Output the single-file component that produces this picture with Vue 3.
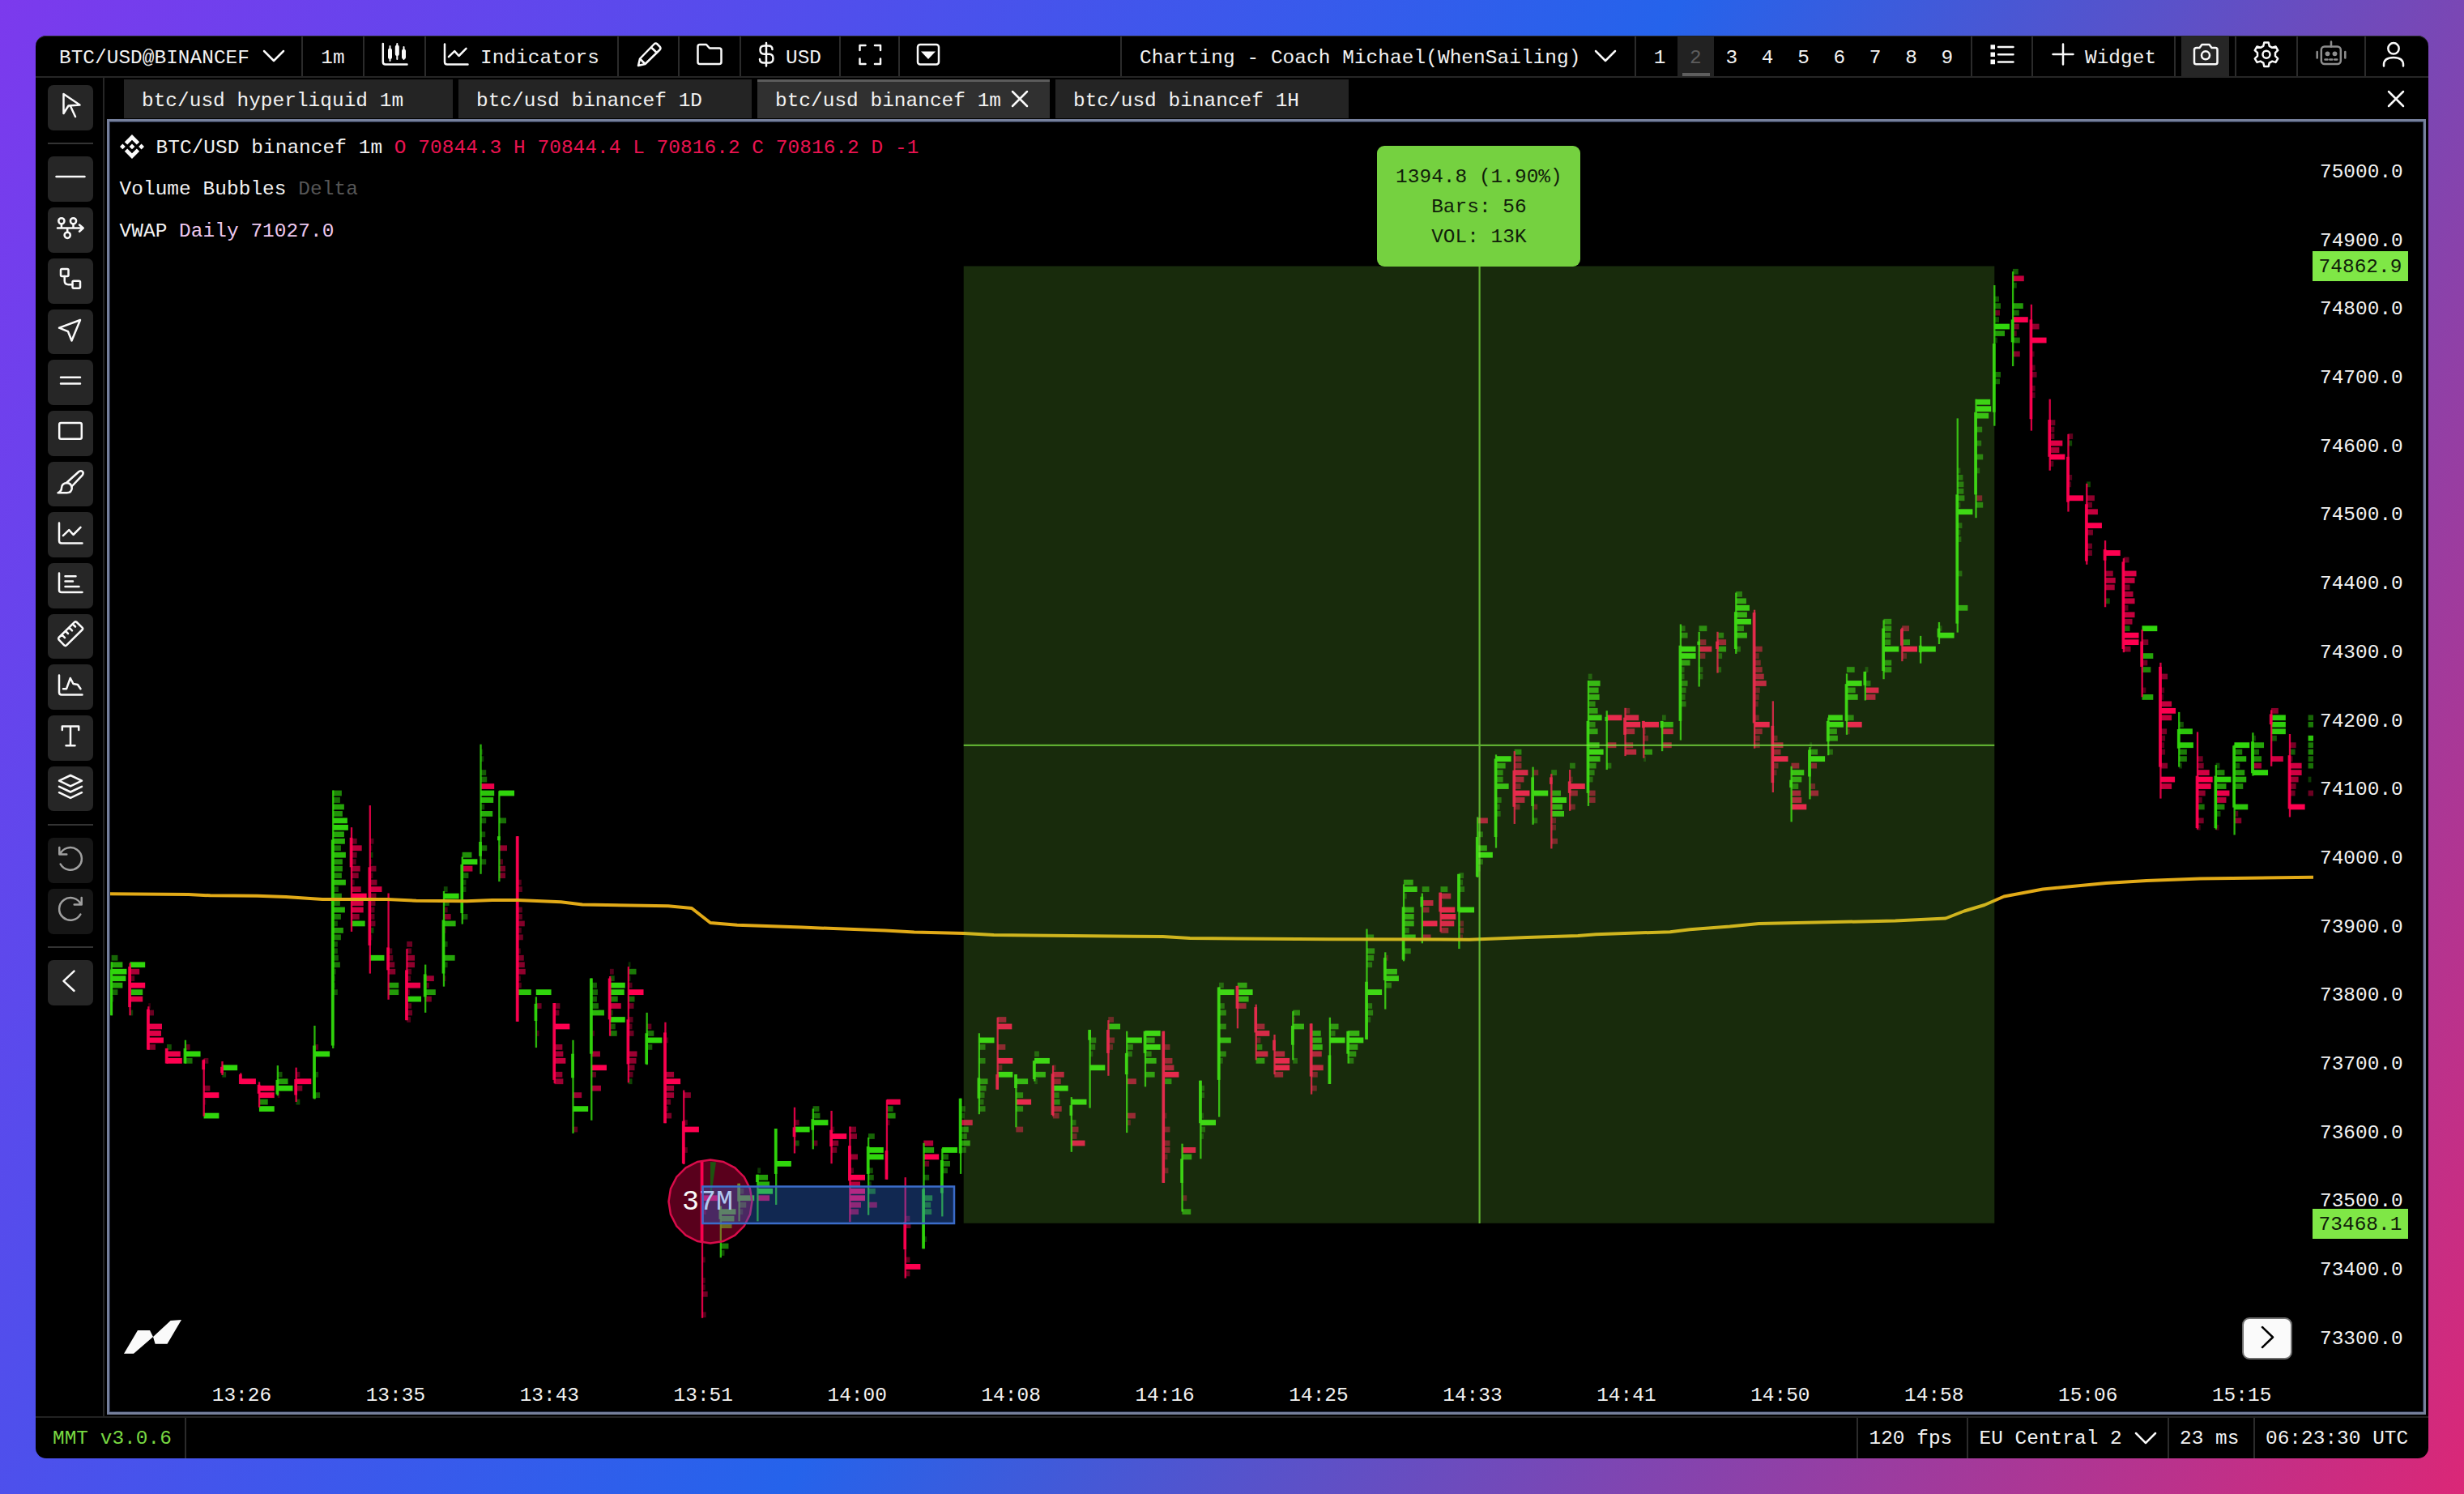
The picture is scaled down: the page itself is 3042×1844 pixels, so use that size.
<script setup>
const icons = {
  chevron: '<path d="M8 14l12 12 12-12"/>',
  candles: '<path d="M5.8 7v22.500q0 3 3 3H35.500"/><path stroke-width="2" d="M14.500 10v18M23.300 7v19M31.500 11v15"/><path stroke-width="5" d="M14.500 15v8.500M23.300 11v8.500M31.500 16v7.500"/>',
  line: '<path d="M6 7.500v22q0 3 3 3H34.500M10.900 23.200l7.300-7.100 5.300 5.900 9-9.100"/>',
  pencil: '<path d="M7 34l2-8.500L26.500 7.500q2-2 4 0l3 3q2 2 0 4L15.500 32zM9 25.500l6.500 6.500M23 11.500l6.800 6.500"/>',
  folder: '<path d="M5.500 10.500q0-2.500 2.500-2.500h8l4 4.500h12q2.500 0 2.500 2.500v14.500q0 2.500-2.500 2.500H8q-2.500 0-2.500-2.500z"/>',
  dollar: '<path d="M20 6v28.500M27.500 14q0-4.500-5-4.500h-5q-5 0-5 5t5 5.300h6q5 0 5 5.400t-5 5.300h-6.500q-5 0-5-4.500"/>',
  scan: '<path d="M7.500 15V9h7M26 9h7v6M33 25.500V32h-7M14.500 32h-7v-6.500"/>',
  boxdown: '<rect x="7" y="8" width="26" height="24.500" rx="3"/><path fill="currentColor" stroke="none" d="M11 16.500h18L20 26z"/>',
  list: '<path d="M15 11h18.500M15 20.300h18.500M15 29.400h18.500"/><path stroke="none" fill="currentColor" d="M5.500 8.200h5.500v5.600H5.500zM5.500 17.500h5.500v5.600H5.500zM5.500 26.600h5.500v5.600H5.500z"/>',
  plus: '<path d="M20 7.500v25M7.500 20h25"/>',
  camera: '<path d="M9 12h3.500l3-4h9l3 4H32q2.500 0 2.500 2.500V30q0 2.300-2.500 2.300H8.500Q6 32.300 6 30V14.500Q6 12 9 12z"/><circle cx="20" cy="21.300" r="5"/>',
  gear: '<path d="M17.300 5.500h5.400l1 4.300 3.500 2 4.300-1.300 2.700 4.600-3.200 3.100v4l3.200 3.100-2.700 4.600-4.300-1.300-3.500 2-1 4.400h-5.400l-1-4.400-3.500-2-4.300 1.300-2.700-4.600L9 22.200v-4l-3.200-3.100 2.700-4.600 4.300 1.300 3.500-2z"/><circle cx="20" cy="20.200" r="4.500"/>',
  robot: '<rect x="7.800" y="10.500" width="24" height="21.500" rx="4"/><path d="M20 4.500v6M2.700 17v7.500M37.300 17v7.500"/><path d="M12.500 26.500h3M18.300 26.500h3M24.200 26.500h3"/><g stroke="none" fill="currentColor"><circle cx="15.500" cy="19.300" r="2.900"/><circle cx="24.500" cy="19.300" r="2.900"/></g>',
  user: '<circle cx="20" cy="12.800" r="6.700"/><path d="M8 34.500v-1.500q0-9 12-9t12 9v1.500"/>',
  close: '<path d="M11 11l18 18M29 11L11 29"/>',
  cursor: '<path d="M11.500 6v24l6-9.500 14-1z"/><path d="M20 21l6 13"/>',
  hline: '<path d="M2.500 19H37.500"/>',
  nodes: '<circle cx="8.900" cy="10.800" r="3.600"/><circle cx="23.500" cy="10.800" r="3.600"/><circle cx="16.200" cy="28.300" r="3.600"/><path d="M4 19.500h31.500M31 15.500l4.700 4-4.700 4.200M8.900 14.500v5M23.500 14.500v5M16.200 19.500v5"/>',
  connector: '<rect x="8" y="8" width="9.500" height="9" rx="1.500"/><rect x="22.500" y="22.700" width="9.500" height="9" rx="1.500"/><path d="M12.700 17v5.500q0 4.700 4.700 4.700h5"/>',
  arrow: '<path d="M32 8L6 17.700l11 4.500 4.500 11.300z"/>',
  equal: '<path d="M8 15.700h24M8 23.600h24"/>',
  rect: '<rect x="6.200" y="10" width="27.600" height="19.800" rx="2"/>',
  brush: '<path d="M15.500 20.500L30.500 7q2.500-1.500 4.300 0t0 4.300L21.500 25.500"/><path d="M4.500 33.300h11q6 0 6.300-6-.5-6-6.500-6.300-6 .5-6.300 6.300 0 4-4.500 6z"/>',
  hist: '<path d="M6 7.500v21q0 2.500 3 2.500h25.500M13.500 11.200h13M13.500 17.600h9.500M13.500 24h17"/>',
  ruler: '<path d="M27.200 4.500q-1-.5-2 .2L5.500 24q-1 1.200 0 2.400l7 7.200q1.200 1 2.400 0L34.800 14q1-1 0-2.200zM9.500 20.500l3.500 3.600M14 16l3 3M18.500 11.700l3.500 3.600M23 7.500l3 3"/>',
  profile: '<path d="M6 7.500v21q0 3 3 3h25.500M11 24.300h4L19.800 11l3.700 7 5.400 1 3.600 5.300"/>',
  text: '<path d="M9.800 13V8.500h20.400V13M20 8.500V32M14.500 32.200h11"/>',
  layers: '<path d="M20 6l14 6.700-14 6.700-14-6.700zM6 19.800l14 6.700 14-6.700M6 27.200l14 6.700 14-6.700"/>',
  undo: '<path d="M6.300 6v8.500h9M7 14.500A14 13.800 0 1 1 7.600 26.500"/>',
  redo: '<path d="M33.700 6v8.500h-9M33 14.500A14 13.800 0 1 0 32.400 26.500"/>',
  back: '<path d="M24.500 7.600L11.500 19.800l13 12.200"/>',
  next: '<path d="M14 8l13 12.500L14 33"/>',
}

const tabs = [
  { name: 'btc/usd hyperliquid 1m', cls: 't1' },
  { name: 'btc/usd binancef 1D', cls: 't2' },
  { name: 'btc/usd binancef 1m', cls: 't3 on', close: true },
  { name: 'btc/usd binancef 1H', cls: 't4' },
]

const tools = [
  ['cursor'],
  ['hline', 'nodes', 'connector', 'arrow', 'equal', 'rect', 'brush', 'line', 'hist', 'ruler', 'profile', 'text', 'layers'],
  ['undo', 'redo'],
  ['back'],
]

const prices = Array.from({ length: 18 }, (_, i) => (75000 - i * 100).toFixed(1))
const times = ['13:26', '13:35', '13:43', '13:51', '14:00', '14:08', '14:16', '14:25', '14:33', '14:41', '14:50', '14:58', '15:06', '15:15']

// One line per minute: side, wick top/bottom, body top/bottom, first level, then
// a delta per level (negative = sell). Levels count down from 75000 in steps of 10.
const raw = `
g 115.1 122.9 116.2 122.9 114 7 13 18 17 13 7 2
r 115.3 122.9 115.8 121.7 115 18 -11 -5 -18 15 -15 0 3
r 121.6 127.9 122 127.9 121 -2 -6 0 -16 -15 -18 -8
r 127.7 129.9 127.7 129.9 127 5 -16 -18
g 126.5 129.9 127.7 129.9 127 -5 18 8
r 129.3 137.6 129.4 130.8 129 -5 0 0 0 -7 -18 -2 0 18
r 129.6 131.6 130.4 131.3 130 18 4
r 131.3 132.9 131.5 132.9 132 -18
r 132.6 136.3 133 134.3 133 -18 -18 10 18
g 130.2 134.6 132.3 134.4 131 5 12 18 -2
r 130.5 135.5 132.2 134.5 131 -4 -18 -7 0 4
g 124.4 135.1 127.3 135 127 -4 18 0 0 4 0 0 6
g 90.1 127.7 97.3 127.3 90 10 8 13 11 17 18 13 14 9 15 11 11 10 15 6 10 8 14 9 5 12 9 5 5 6 8 3 2 2 5
r 95.5 110.7 97 101.3 97 -6 -12 -6 -5 -10 -8 -3 -11 -18 -14 -14 -9 16
r 92.3 116.8 101.3 112.7 97 -4 -2 3 -2 -7 -3 -8 -14 -7 -6 -5 -5 -6 4 -2 0 0 17
r 105.1 120.6 113 116.3 113 -4 -5 -7 -8 0 12 12
r 113.2 123.6 116.3 123.6 112 -6 -5 -9 -9 -5 -4 -16 -3 17 -5 -6 -4
g 115.5 122.5 116.9 120.2 117 -10 -4 12 -7
g 104.8 118.7 109 116.8 104 4 18 6 -4 -8 14 -2 0 4 0 13 4 0 -2
g 99.8 109.6 100.9 108 99 11 18 -12 7 4 4 0 0 0 6
g 83.4 102.3 97.6 99.7 84 2 3 0 6 7 -16 16 15 4 14 6 0 5 0 7 0 6
g 90.2 103.4 96.8 97.4 90 18 0 0 0 8 0 0 0 -9 0 -4 -7 -7
r 96.8 123.8 96.8 123.8 103 -4 -5 0 0 -5 -5 -8 -4 -6 0 -3 -7 -8 -9 -3 -4 16
g 120.2 127.6 121.2 123.7 119 18 0 -6 0 0 0 -3
r 121.1 132.8 121.1 132.3 121 -6 -5 0 -18 0 0 -9 -10 -13 0 -9 -10
g 126.5 140.1 128.5 132 134 -10 0 18 0 0 -5
g 117.5 138.2 117.5 128.5 118 6 7 6 8 15 0 0 -3 0 0 -10 0 -18 -5 0 -11
r 117.2 125.9 117.5 123.5 116 -4 5 18 17 9 -13 3 18 6 8
r 115.8 132.7 123.5 130 115 2 9 2 -4 -18 7 -6 0 -5 -4 -6 0 0 -10 -9 -7 -5 4
g 122.5 130.1 125.5 130 124 -5 8 18 6
r 123.9 138.6 125.4 138.6 126 -3 0 0 0 0 -10 -18 -10 -10 -6 -3 -7
r 133.8 144.6 138.3 144.5 134 -8 0 0 0 -4 -18 0 0 -4
r 144.2 167 144.2 156 149 -18 -3 -4 0 0 0 0 0 0 -3 0 0 -3 -3 -6 0 0 -4
g 150.7 158.2 150.7 152.6 151 18 16 13 0 0 9 4
g 147.4 152.9 147.4 150 148 5 18 8 4
g 146.1 152.9 146.1 147.2 145 3 12 14 18 -14
g 139.4 150.5 139.4 146 144 18
r 136.3 143 139.2 140.6 138 -5 18 0 5
g 136.5 142.4 138 139.6 136 7 8 18 0 0 -5
r 136.8 144.5 139.6 142 139 -3 -18 -8 -6
r 139.1 153 141.9 147 139 -7 -8 0 0 -9 0 -4 -18 -12 -18 -18 -13 -10
g 140.7 152 142 146 140 7 0 18 18 0 5 6 3 8 0 -10
r 135.2 146.8 142.6 146.8 135 -16 7 10 -3
r 146.5 161.2 153 157 152 -5 -6 0 0 0 0 -5 -18 -5
g 141.5 156.9 148.2 156.9 141 -11 12 -18 -6 0 6 0 0 10 8 9 0 0 0 3
g 142.3 152.2 144 148.8 142 18 7 9 6
g 135 146 135 143 136 5 4 -14 9 7 11 6
g 125.5 137.3 132 135 126 18 7 0 7 0 0 10 8 6 5 7
r 123.2 133.7 131.5 133.7 123 -10 -17 0 0 -9 0 -18 -5 18
g 131.5 139.2 131.5 133.5 132 14 0 8 -18 8 0 0 -8
g 129.5 132.5 129.5 132.2 128 5 18 0 13 3
r 130.2 137.6 131.4 137.4 130 -3 -13 -9 18 7 8 -10 -7
g 134.8 142.8 136 137.5 135 18 0 0 5 -8 -6 -16
g 125 136.4 125 126.5 126 7 6 3 0 18
r 123.6 131.7 125 128.4 123 -6 14 0 -7 -5
g 125.2 140 128.4 131.5 126 18 7 6 0 0 0 -11 0 0 0 0 -10 -4
g 125.2 133.3 125.2 128.4 125 18 11 18 7 13 0 11
r 125.2 147.3 125.2 147.3 127 -7 0 -10 -12 -18 9 0 0 0 0 -3 0 -7 0 -7 -7 -4 0 -5
g 141.6 151.5 143.8 147.3 142 -16 11 0 0 0 0 0 -5 0 10
g 132.4 143.8 132.4 138.6 133 4 4 0 0 3 18 5 3
g 118.8 137.7 118.8 132.3 118 5 18 0 6 8 0 8 0 14 0 8 4
r 118.6 124.8 118.6 121.9 118 11 18 13 -10
r 121.3 129.4 121.7 125.4 124 -10 -16 -5 7 -14 10
r 125.7 131.5 126.5 128 128 -12 -18 -18 -10
g 122.3 129.4 124.4 127.2 122 8 -2 13 0 0 0 0 5
r 124.1 134.4 124.1 131.8 125 11 12 13 -12 0 -14 -7 0 -6
g 123.2 132.9 128.7 132.9 124 10 6 18
g 125.2 129.9 125.2 128.5 125 13 18 11 9 6
g 110.3 126.4 118 126.4 111 8 0 9 8 6 0 0 0 18 0 6 7 4
g 113.7 122 114.5 117.8 114 -3 0 14 16 7
g 103.8 115 107.1 114.8 103 11 16 3 0 12 12 12 6 14 0 8
g 105.1 112.4 105.6 107.1 104 8 0 -13 -8 0 -18 0 -10
r 105 110.7 105 107.8 104 8 -12 -2 -17 -18 -16 -9
g 102.3 113.2 102.3 107.8 102 5 4 6 0 0 18 0 -5 -5 -4
g 94 102.8 96.9 102.7 94 -12 0 6 0 11 18 6 3
g 84.9 98.5 85.5 96.9 85 18 11 8 8 15 0 6 4 5
r 84.4 95 87.2 92.5 84 8 -8 -8 -16 -11 -7 -18 -12 -6
g 86.7 95.1 88.2 92.4 87 -6 0 0 18 0 -5 0 5
r 87.7 98.6 88.2 89.2 87 6 0 0 11 18 13 15 -5 -5 0 -7
r 87.1 93.1 88.8 90.5 86 6 0 -3 -18 -9 0 -6
g 74.1 92.4 80 90.5 73 4 14 12 13 8 11 16 8 11 0 13 18 14 9 7 5 0 -8 -8
g 78.5 87.1 79.4 80 79 -18 0 0 0 -11 0 0 5
r 78.1 85.1 79.5 82 78 -5 -16 -18 -11 0 -9 -13
r 80 85.4 80 81 80 -18 -2 -5 0 10 2
g 80 84.4 80 81 79 4 13 -13 0 -11
g 65.9 82.8 69 80 66 5 8 0 18 18 11 4 4 8 6 5 6
g 67 75 68.4 68.9 66 9 0 -8 -15 -7 0 4 4
r 67 73 68.4 69.5 67 7 -10 10 5 0 4
g 61.3 70.2 64.1 69.5 61 7 12 16 13 18 9 13 0 5
r 63.8 84 64.2 80.3 69 -9 -5 -7 -9 -11 -14 -6 -5 -4 0 -5 -18 -9 -6 -6
r 77.1 90.4 80.7 89 82 -5 -12 -9 -18 -6 -4
g 86.6 94.7 88.6 89.7 86 -9 15 12 8 -11 -12 -18
g 83.8 91.4 84.2 88.1 83 2 9 18 -8 0 0 -6 -10
g 79.5 85 80 83 79 17 18 10 11 0 5
g 73.1 82 74.6 80 72 9 0 18 10 13 0 0 8 -18 -3
g 72.8 77 72.8 74.8 72 3 0 6 -16 -12
g 65.3 73.9 66.5 72.7 65 9 9 8 8 18 0 9 9
r 66.4 71.3 66.6 69 66 -8 0 9 -18 -5
g 67.6 71.6 69 70 69 18
g 65.6 68.8 66.5 67.8 66 3 18
g 35.9 67.1 47 65.8 43 3 6 7 7 8 3 18 0 5 3 4 0 0 0 0 5 0 0 0 0 12
g 33.1 50.4 35 47 33 17 18 15 0 7 0 6 0 8 0 4 0 0 0 -7 8
g 16.5 37 25 35 18 5 7 -6 5 18 12 3 0 0 0 0 7 6
g 14.5 28.3 21.5 24.8 14 6 -13 4 0 0 12 7 -18 -7 -4 8 0 -8
r 19.3 37.7 21.5 36 22 -9 0 -18 0 -3 0 -4 -6 0 -4 -4
r 33.1 43.5 36.1 41.5 36 -6 -5 -5 -15 -11 -18 -4
r 38.2 49.5 41.5 48.1 38 -5 4 0 0 0 0 -4 -3 0 -18
r 45.4 57.2 48.4 56.7 45 4 0 -9 -6 -13 0 -18 -7 0 -6 -6
r 53.7 63.4 55 56.6 55 -18 0 0 -9 -12 -11 0 5
r 56.3 70 56.8 69.5 56 -6 0 -15 -13 -7 -11 -13 -5 -13 -10 7 -18 -18 -8
r 66.7 76.5 68.4 72.1 66 18 0 -7 0 13 -6 10 0 0 -4 13
r 71.5 91.3 72.1 86.7 73 -8 0 -4 -3 -13 -18 -13 0 -7 -5 -4 -5 0 -8 0 -17 -13
g 78.7 86.7 81.2 84 80 5 16 0 17 9 9 3
r 81.6 95.8 88 95.6 85 -6 -7 -14 -18 -16 -9 -5 8 0 -7 -3
g 86.4 95.8 88 95.6 86 4 10 18 12 -16 -12 10 5 0 -3
g 83.5 96.6 83.6 92.6 83 18 9 14 6 12 14 10 0 0 16 -4 -8
g 81.7 88 83 87.6 82 3 13 7 10 -10 18
r 78.4 86.6 79 80.5 78 -8 17 17 17 6 0 0 -14
r 81.9 94 85 92.8 83 -7 6 -3 -14 -14 -10 -7 -6 0 -18
g 79 79 79 79 79 7 9 0 16 9 10 7 8 0 3 0 -6`

const LEVEL = 8.47
const y = (level) => 212.3 + level * LEVEL
const GREEN = '#30d60c'
const RED = '#ff0050'

const candles = raw.trim().split('\n').map((row, i) => {
  const [side, ...rest] = row.split(' ')
  const [top, bottom, bodyTop, bodyBottom, first, ...deltas] = rest.map(Number)
  const x = 137.6 + i * 22.79
  return {
    x,
    color: side === 'g' ? GREEN : RED,
    top: y(top),
    height: y(bottom) - y(top),
    bodyTop: y(bodyTop),
    bodyHeight: y(bodyBottom) - y(bodyTop),
    bars: deltas
      .map((d, n) => ({
        y: y(first + n) + 1,
        w: Math.abs(d) + 0.8,
        color: d > 0 ? GREEN : RED,
        alpha: Math.min(1, 0.12 + Math.abs(d) * 0.05),
      }))
      .filter((b) => b.w > 1),
  }
})

const vwap = [
  [132, 1103.3], [232.7, 1104], [259.5, 1105.3], [317.5, 1105.7], [353, 1107], [398, 1110], [478, 1110], [514, 1111.7],
  [576, 1112.3], [607.7, 1111], [639, 1111], [692.5, 1113.3], [719, 1116.5], [825, 1118.3], [854, 1121], [877, 1139],
  [910, 1141.8], [990, 1144.6], [1093, 1148.6], [1128.6, 1150.4], [1190, 1152], [1226.8, 1154], [1400, 1155.7],
  [1435.7, 1155.9], [1469, 1158], [1640, 1159.2], [1814, 1159.7], [1885.5, 1156.9], [1948, 1155], [1970.4, 1153.2],
  [2061.9, 1150.2], [2086.4, 1147.3], [2135.5, 1143.6], [2171.3, 1139.9], [2340, 1136.6], [2402, 1133.5], [2425, 1124.500],
  [2450, 1117], [2474, 1106.5], [2522, 1097.5], [2600, 1090], [2650, 1087], [2716, 1084.5], [2856, 1082.8],
].map((p) => p.join(',')).join(' ')

const bubble = Array.from({ length: 20 }, (_, i) => {
  const a = (i * Math.PI) / 10
  return `${(877 + 51.5 * Math.sin(a)).toFixed(1)},${(1483 - 51.5 * Math.cos(a)).toFixed(1)}`
}).join(' ')
</script>

<template>
  <div class="desktop">
    <div class="window">
      <header class="topbar">
        <div class="cell symbol">
          <span>BTC/USD@BINANCEF</span>
          <svg class="ico chev" viewBox="0 0 40 40" v-html="icons.chevron" />
        </div>
        <div class="cell w76"><span>1m</span></div>
        <div class="cell w76"><svg class="ico" viewBox="0 0 40 40" v-html="icons.candles" /></div>
        <div class="cell indicators">
          <svg class="ico" viewBox="0 0 40 40" v-html="icons.line" />
          <span>Indicators</span>
        </div>
        <div class="cell w75"><svg class="ico" viewBox="0 0 40 40" v-html="icons.pencil" /></div>
        <div class="cell w76"><svg class="ico" viewBox="0 0 40 40" v-html="icons.folder" /></div>
        <div class="cell currency">
          <svg class="ico" viewBox="0 0 40 40" v-html="icons.dollar" />
          <span>USD</span>
        </div>
        <div class="cell w73"><svg class="ico" viewBox="0 0 40 40" v-html="icons.scan" /></div>
        <div class="cell bare"><svg class="ico" viewBox="0 0 40 40" v-html="icons.boxdown" /></div>
        <div class="spacer"></div>
        <div class="cell layout">
          <span>Charting - Coach Michael(WhenSailing)</span>
          <svg class="ico chev" viewBox="0 0 40 40" v-html="icons.chevron" />
        </div>
        <div class="cell pages">
          <div v-for="n in 9" :key="n" class="page" :class="{ active: n === 2 }"><span>{{ n }}</span></div>
        </div>
        <div class="cell w75"><svg class="ico" viewBox="0 0 40 40" v-html="icons.list" /></div>
        <div class="cell widget">
          <svg class="ico" viewBox="0 0 40 40" v-html="icons.plus" />
          <span>Widget</span>
        </div>
        <div class="cell w75">
          <div class="shot"><svg class="ico" viewBox="0 0 40 40" v-html="icons.camera" /></div>
        </div>
        <div class="cell w76"><svg class="ico" viewBox="0 0 40 40" v-html="icons.gear" /></div>
        <div class="cell w83"><svg class="ico dim" viewBox="0 0 40 40" v-html="icons.robot" /></div>
        <div class="cell last"><svg class="ico" viewBox="0 0 40 40" v-html="icons.user" /></div>
      </header>

      <div class="body">
        <aside class="tools">
          <div v-for="(group, g) in tools" :key="g" class="group">
            <button v-for="t in group" :key="t" class="tool" :class="{ muted: g === 2 }">
              <svg class="ico" viewBox="0 0 40 40" v-html="icons[t]" />
            </button>
          </div>
        </aside>

        <main class="work">
          <nav class="tabs">
            <div v-for="t in tabs" :key="t.name" class="tab" :class="t.cls">
              <span>{{ t.name }}</span>
              <svg v-if="t.close" class="ico" viewBox="0 0 40 40" v-html="icons.close" />
            </div>
            <div class="spacer"></div>
            <svg class="ico tabs-close" viewBox="0 0 40 40" v-html="icons.close" />
          </nav>

          <section class="pane">
            <svg class="plot" viewBox="136 151 2719.500 1591">
              <g v-for="(c, i) in candles" :key="i">
                <rect v-for="(b, n) in c.bars" :key="n" :x="c.x" :y="b.y" :width="b.w" height="6.800" :fill="b.color" :fill-opacity="b.alpha" />
                <rect :x="c.x - 1" :y="c.top" width="2.300" :height="c.height" :fill="c.color" fill-opacity=".85" />
                <rect :x="c.x - 2.2" :y="c.bodyTop" width="3.700" :height="c.bodyHeight" :fill="c.color" fill-opacity=".92" />
              </g>
              <polyline :points="vwap" fill="none" stroke="#e2aa17" stroke-width="4" stroke-linejoin="round" />
              <polygon :points="bubble" fill="#ff0050" fill-opacity=".35" stroke="#d80c4a" stroke-width="2.500" />
              <polygon points="877,1482 877,1434 884,1434.500" fill="#1d5410" />
              <text x="873.500" y="1493" text-anchor="middle" class="bubble-text">37M</text>
              <rect x="867.500" y="1464.500" width="310.500" height="45.500" fill="#2e70e0" fill-opacity=".36" stroke="#3b6cc9" stroke-width="2.500" />
              <rect x="1189.700" y="328.500" width="1272.600" height="1181.300" fill="#7de742" fill-opacity=".19" />
              <path d="M1826.600 328.500V1510M1189.700 919.800H2462.300" stroke="#7de742" stroke-opacity=".7" stroke-width="2.200" />
              <path fill="#fafafa" d="M170 1642h15l4 8-24 20.700h-12zM210.600 1630l13.400-1-17.500 29.700h-14.900l-2.600-8.700z" />
            </svg>

            <div class="legend">
              <div class="row">
                <svg class="binance" viewBox="0 0 24 24"><path fill="#fafafa" d="M16.624 13.920l2.718 2.716-7.353 7.353-7.353-7.353 2.717-2.716 4.636 4.660 4.635-4.660zm4.637-4.636L24 12l-2.715 2.716L18.568 12l2.693-2.716zm-9.272 0l2.716 2.692-2.717 2.717L9.272 12l2.716-2.715zm-9.273 0L5.409 12l-2.692 2.692L0 12l2.716-2.716zM11.989.012l7.353 7.329-2.718 2.715-4.635-4.636-4.636 4.660-2.717-2.716L11.989.012z" /></svg>
                <span>BTC/USD binancef 1m <b class="down">O 70844.3 H 70844.4 L 70816.2 C 70816.2 D -1</b></span>
              </div>
              <div class="row"><span>Volume Bubbles <b class="faint">Delta</b></span></div>
              <div class="row"><span>VWAP <b class="pink">Daily 71027.0</b></span></div>
            </div>

            <div class="measure">
              <span>1394.8 (1.90%)</span>
              <span>Bars: 56</span>
              <span>VOL: 13K</span>
            </div>

            <div class="prices">
              <span v-for="p in prices" :key="p">{{ p }}</span>
            </div>
            <div class="tag high"><span>74862.9</span></div>
            <div class="tag low"><span>73468.1</span></div>

            <div class="times">
              <span v-for="t in times" :key="t">{{ t }}</span>
            </div>

            <button class="jump"><svg class="ico" viewBox="0 0 40 40" v-html="icons.next" /></button>
          </section>
        </main>
      </div>

      <footer class="status">
        <div class="scell version"><span>MMT v3.0.6</span></div>
        <div class="spacer"></div>
        <div class="scell fps"><span>120 fps</span></div>
        <div class="scell region">
          <span>EU Central 2</span>
          <svg class="ico chev" viewBox="0 0 40 40" v-html="icons.chevron" />
        </div>
        <div class="scell ping"><span>23 ms</span></div>
        <div class="scell clock"><span>06:23:30 UTC</span></div>
      </footer>
    </div>
  </div>
</template>

<style>
html, body { margin: 0; background: #2563eb; }
</style>

<style scoped>
* { box-sizing: border-box; }
.desktop {
  width: 3042px;
  height: 1844px;
  padding: 44px;
  overflow: hidden;
  background: linear-gradient(121deg, #7c3aed 0%, #2563eb 50%, #db2777 100%);
  font-family: "Liberation Mono", monospace;
  font-size: 24.4px;
  letter-spacing: .05px;
  line-height: 28px;
  color: #f2f2f2;
}
.window {
  width: 2954px;
  height: 1756px;
  display: flex;
  flex-direction: column;
  background: #000;
  border-radius: 13px;
  overflow: hidden;
  box-shadow: inset 0 1px #2c2c30;
}
span { white-space: pre; }
b { font-weight: 400; }
.ico {
  display: block;
  flex: none;
  width: 40px;
  height: 40px;
  fill: none;
  stroke: currentColor;
  color: #fafafa;
  stroke-width: 2.500px;
  stroke-linecap: round;
  stroke-linejoin: round;
}
.ico.dim { color: #8d8d8d; }
.spacer { flex: 1; }

.topbar {
  display: flex;
  height: 52px;
  flex: none;
  border-bottom: 2px solid #262626;
}
.cell {
  display: flex;
  align-items: center;
  justify-content: center;
  flex: none;
  border-right: 2px solid #2b2b2b;
}
.cell span { padding-top: 6px; }
.cell .ico { margin-bottom: 4px; }
.cell .chev { margin-bottom: 0; }
.w73 { width: 73px; }
.w75 { width: 75px; }
.w76 { width: 76px; }
.w83 { width: 84px; }
.symbol { width: 330px; justify-content: flex-start; padding-left: 29px; gap: 10px; }
.indicators { width: 238px; justify-content: flex-start; padding-left: 17px; gap: 10px; }
.currency { width: 123px; justify-content: flex-start; padding-left: 11px; gap: 4px; }
.bare { border-right: 0; width: 70px; }
.layout { width: 637px; border-left: 2px solid #2b2b2b; justify-content: flex-start; padding-left: 22px; gap: 10px; letter-spacing: .08px; }
.pages { width: 415px; }
.page { width: 44.360px; height: 100%; display: flex; align-items: center; justify-content: center; }
.page.active { background: #222; color: #5c5c5c; box-shadow: inset 6px 0 #222, inset -5px 0 #222, inset 0 -4px #5e5e5e; }
.widget { width: 176px; justify-content: flex-start; padding-left: 17px; gap: 7px; }
.shot { width: 59px; height: 100%; display: flex; align-items: center; justify-content: center; background: #262626; }
.last { width: 77px; border-right: 0; padding-right: 10px; }

.body { flex: 1; display: flex; min-height: 0; }
.tools {
  width: 85px;
  flex: none;
  border-right: 2px solid #262626;
  padding: 9px 0 0 15px;
}
.group { display: flex; flex-direction: column; gap: 7px; width: 55.500px; }
.group + .group::before {
  content: "";
  height: 1.500px;
  margin: 15.700px 0 8.600px;
  background: #333;
}
.tool {
  height: 55.700px;
  border: 0;
  border-radius: 7px;
  padding: 0 0 5px;
  background: #262626;
  display: flex;
  align-items: center;
  justify-content: center;
}
.tool.muted { background: #161616; }
.tool.muted .ico { color: #a0a0a0; }

.work { flex: 1; display: flex; flex-direction: column; min-width: 0; }
.tabs { height: 51px; flex: none; display: flex; padding: 2px 0 1px 24px; }
.tab {
  display: flex;
  align-items: center;
  padding: 0 0 0 22px;
  margin-right: 7px;
  background: #242424;
}
.tab span { padding-top: 5px; }
.tab .ico { margin-left: 3px; }
.tab.on { background: #303030; box-shadow: inset 0 3px #5c5c5c; }
.t1 { width: 406px; }
.t2 { width: 362px; }
.t3 { width: 361px; }
.t4 { width: 362px; }
.tabs-close { margin: 4px 20px 0 0; }

.pane {
  position: relative;
  margin-left: 3px;
  width: 2863px;
  height: 1599px;
  border: 3px solid #76809c;
  box-shadow: inset 0 0 0 1px #232c44;
}
.plot { position: absolute; left: 1px; top: 1px; width: 2719.500px; height: 1591px; }
.bubble-text { font: 35px "Liberation Mono", monospace; fill: #fafafa; }

.legend { position: absolute; left: 12.500px; top: 5px; letter-spacing: .08px; }
.row { height: 51.600px; display: flex; align-items: center; }
.row span { padding-top: 4px; }
.binance { width: 30px; height: 30px; margin-right: 15px; }
.down { color: #ea1350; }
.faint { color: #565656; }
.pink { color: #edc8ee; }

.measure {
  position: absolute;
  left: 1565.400px;
  top: 30px;
  width: 251px;
  height: 148.500px;
  border-radius: 9px;
  background: #75d140;
  color: #10200a;
  display: flex;
  flex-direction: column;
  align-items: center;
  justify-content: center;
  line-height: 37px;
  padding-top: 2px;
}

.prices {
  position: absolute;
  left: 2729px;
  top: 21px;
  display: flex;
  flex-direction: column;
}
.prices span { height: 84.700px; line-height: 84.700px; }
.tag {
  position: absolute;
  left: 2720px;
  width: 118px;
  height: 37px;
  background: #7fe746;
  color: #10200a;
  display: flex;
  align-items: center;
  justify-content: center;
  padding-top: 3px;
}
.high { top: 160px; }
.low { top: 1342px; }

.times {
  position: absolute;
  left: 68.500px;
  top: 1558.500px;
  display: flex;
  height: 32px;
}
.times span { width: 189.950px; text-align: center; }

.jump {
  position: absolute;
  left: 2633px;
  top: 1476px;
  width: 62px;
  height: 52px;
  border: 2.500px solid #6e6e6e;
  border-radius: 9px;
  background: #fafafa;
  padding: 0 0 4px;
  display: flex;
  align-items: center;
  justify-content: center;
}
.jump .ico { color: #000; }

.status {
  flex: none;
  height: 52px;
  display: flex;
  border-top: 2px solid #222;
}
.scell { display: flex; align-items: center; border-left: 2px solid #2b2b2b; }
.scell span { padding-top: 2px; }
.version { width: 186px; padding-left: 21px; border-left: 0; border-right: 2px solid #2b2b2b; color: #78d842; }
.fps { width: 136px; padding-left: 14px; }
.region { width: 248.500px; padding-left: 14px; gap: 9px; }
.ping { width: 106px; padding-left: 13px; }
.clock { width: 216px; padding-left: 13px; }
</style>
